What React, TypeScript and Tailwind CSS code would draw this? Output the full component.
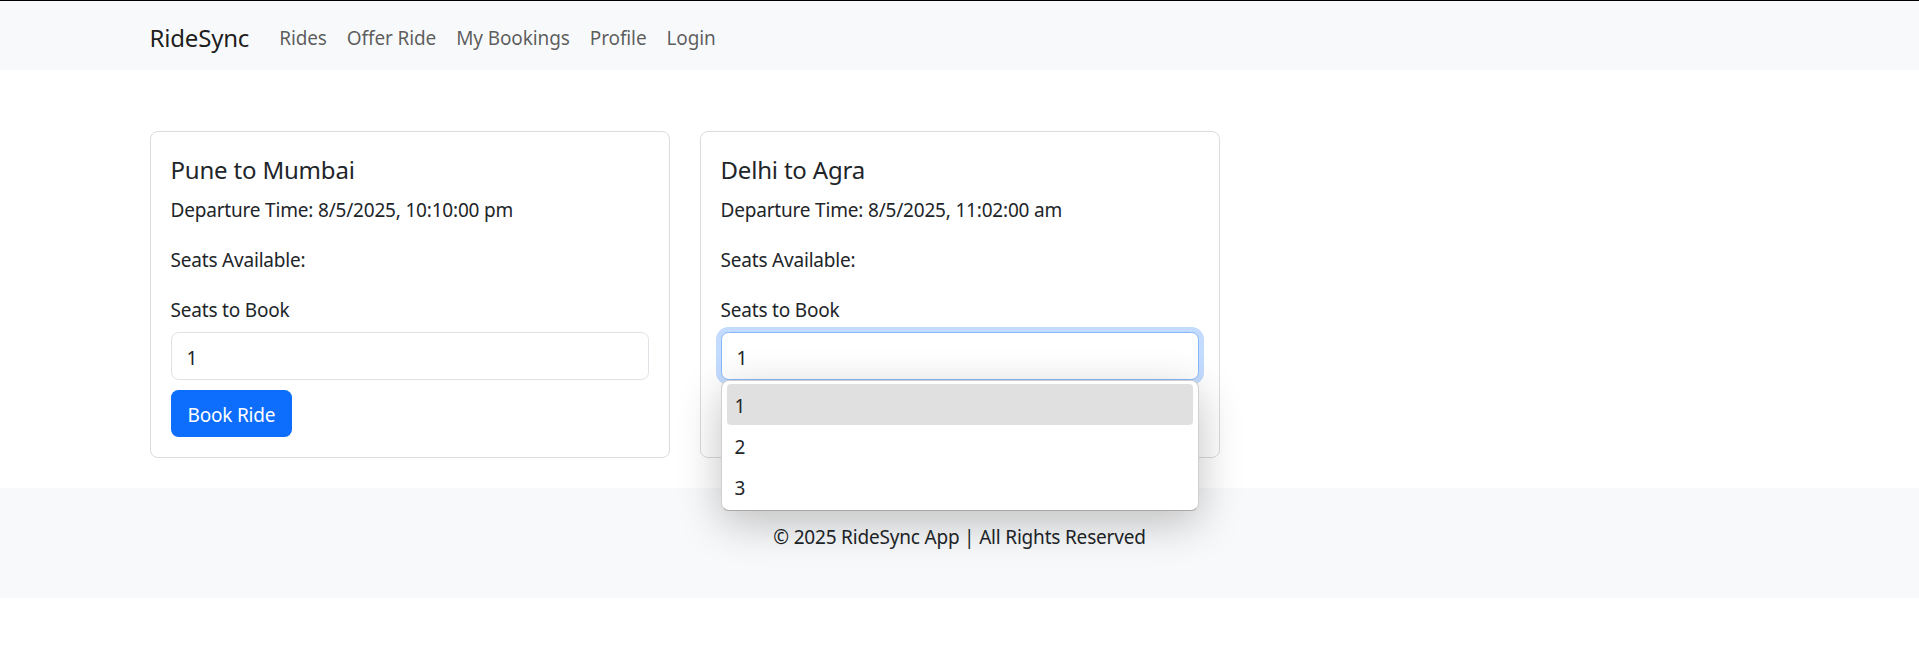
import React from 'react';

interface Ride {
    id: number;
    from: string;
    to: string;
    departure: string;
}

const rides: Ride[] = [
    { id: 1, from: 'Pune', to: 'Mumbai', departure: '8/5/2025, 10:10:00 pm' },
    { id: 2, from: 'Delhi', to: 'Agra', departure: '8/5/2025, 11:02:00 am' },
];

const navLinks = ['Rides', 'Offer Ride', 'My Bookings', 'Profile', 'Login'];

const SeatOptions: React.FC = () => (
    <div className="absolute left-0 right-0 top-full z-20 h-[131px] rounded-[8px] border border-[#cfcfcf] border-b-[#a8a8a8] bg-white pt-[3px] shadow-[0_12px_44px_rgba(0,0,0,0.24)]">
        {['1', '2', '3'].map((n, i) => (
            <div
                key={n}
                className={`mx-[5px] flex h-[41px] items-center rounded-[4px] pl-[8px] pt-[5px] ${i === 0 ? 'bg-[#e0e0e0]' : ''}`}
            >
                {n}
            </div>
        ))}
    </div>
);

const RideCard: React.FC<{ ride: Ride; open?: boolean }> = ({ ride, open }) => (
    <div className="rounded-[8px] border border-[#dcdcdc] bg-white p-[20px]">
        <h5 className="mb-[7px] pt-[3px] text-[24px] leading-[30px]">{ride.from} to {ride.to}</h5>
        <p className="mb-[17px] pt-[3px] leading-[30px]">Departure Time: {ride.departure}</p>
        <p className="mb-[17px] pt-[3px] leading-[30px]">Seats Available:</p>
        <label className="mb-[7px] block pt-[3px] leading-[30px]">Seats to Book</label>
        <div className="relative">
            <div
                className={`flex h-[47.5px] items-center rounded-[7.5px] border bg-white px-[15px] pt-[4px] ${
                    open ? 'border-[#86b7fe] shadow-[0_0_0_5px_rgba(13,110,253,0.25)]' : 'border-[#dee2e6]'
                }`}
            >
                1
            </div>
            {open && <SeatOptions />}
        </div>
        <button className="mt-[10px] h-[47.5px] rounded-[7.5px] bg-[#0d6efd] px-[17px] pt-[3px] text-white">
            Book Ride
        </button>
    </div>
);

export default function App() {
    return (
        <div
            className="bg-white text-[19px] tracking-[-0.01em] text-[#212529]"
            style={{ fontFamily: '"Segoe UI", "Noto Sans", sans-serif' }}
        >
            {/* Navbar */}
            <nav className="h-[70px] border-t border-black bg-[#f8f9fa]">
                <div className="mx-auto flex h-full w-[1650px] items-center px-[15px] pt-[5px]">
                    <span className="mr-[20px] text-[24px] text-black/90">RideSync</span>
                    {navLinks.map(link => (
                        <a key={link} className="px-[10px] tracking-[-0.006em] text-black/65">{link}</a>
                    ))}
                </div>
            </nav>

            {/* Rides */}
            <main className="mx-auto mt-[61px] w-[1650px] px-[15px]">
                <div className="grid grid-cols-3 gap-[30px]">
                    {rides.map(ride => (
                        <div key={ride.id} className="mb-[30px]">
                            <RideCard ride={ride} open={ride.id === 2} />
                        </div>
                    ))}
                </div>
            </main>

            {/* Footer */}
            <footer className="h-[110px] bg-[#f8f9fa] pt-[34px] text-center leading-[30px]">
                <p>© 2025 RideSync App | All Rights Reserved</p>
            </footer>
        </div>
    );
}
